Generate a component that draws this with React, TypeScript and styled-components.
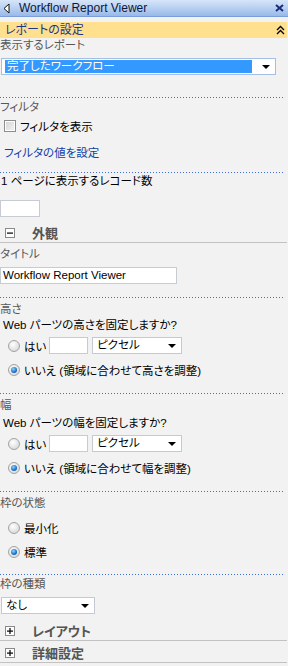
import styled, { createGlobalStyle } from "styled-components";

const GlobalStyle = createGlobalStyle`
  html, body {
    margin: 0;
    padding: 0;
    background: #f2f2f2;
  }
  body {
    font-family: "Liberation Sans", "Noto Sans CJK JP", sans-serif;
    font-size: 11.5px;
    font-feature-settings: "palt" 1;
    color: #000;
  }
`;

const Pane = styled.div`
  width: 288px;
  min-height: 666px;
  background: #f2f2f2;
  overflow: hidden;
`;

const TitleBar = styled.div`
  height: 16px;
  border-bottom: 1px solid #7c9fd9;
  background: linear-gradient(#d6e5f9, #b5cef1 55%, #98b9e8);
  display: flex;
  align-items: center;
  padding: 0 4px 0 3px;
  color: #0d1638;
  font-size: 12px;
`;

const TitleText = styled.span`
  margin-left: 9px;
  flex: 1;
  line-height: 16px;
`;

const Content = styled.div`
  width: 287px;
`;

const SectionBar = styled.div`
  margin-top: 5px;
  height: 16px;
  background: #ffe08e;
  display: flex;
  align-items: center;
  justify-content: space-between;
  padding: 0 2px 0 5px;
  color: #1e3684;
  line-height: 16px;
  font-size: 12px;
`;

const Label = styled.div<{ $mt: number; $muted?: boolean; $indent?: number }>`
  margin-top: ${(p) => p.$mt}px;
  height: 14px;
  line-height: 14px;
  padding-left: ${(p) => p.$indent ?? 0}px;
  color: ${(p) => (p.$muted ? "#585858" : "#000")};
  white-space: nowrap;
`;

const Divider = styled.div<{ $mt: number }>`
  margin-top: ${(p) => p.$mt}px;
  width: 285px;
  height: 1px;
  background: repeating-linear-gradient(
    to right,
    #3f6fd8 0 1px,
    transparent 1px 3px
  );
`;

const SelectBox = styled.div<{ $w: number; $mt?: number; $x?: number; $blue?: boolean }>`
  box-sizing: border-box;
  margin-top: ${(p) => p.$mt ?? 0}px;
  margin-left: ${(p) => p.$x ?? 0}px;
  width: ${(p) => p.$w}px;
  height: 17px;
  border: 1px solid ${(p) => (p.$blue ? "#a4bfe2" : "#c3cad4")};
  background: #fff;
  display: flex;
  align-items: center;
  padding: 0 5px 0 3px;
  line-height: 13px;
  flex-shrink: 0;
`;

const SelectValue = styled.span<{ $selected?: boolean }>`
  flex: 1;
  height: 13px;
  box-sizing: border-box;
  padding-left: 1px;
  white-space: nowrap;
  ${(p) =>
    p.$selected
      ? `background: #3399ff; color: #fff; border: 1px dotted #d9782c; line-height: 11px; margin-right: 6px;`
      : ""}
`;

const Arrow = styled.span`
  width: 0;
  height: 0;
  border-left: 4px solid transparent;
  border-right: 4px solid transparent;
  border-top: 4px solid #000;
  margin-left: 4px;
`;

const CheckRow = styled.div<{ $mt: number }>`
  margin-top: ${(p) => p.$mt}px;
  height: 16px;
  display: flex;
  align-items: center;
  padding-left: 4px;
  gap: 4px;
`;

const CheckBox = styled.span`
  box-sizing: border-box;
  width: 12px;
  height: 12px;
  border: 1px solid #8d8d8d;
  background: linear-gradient(135deg, #d4d4d4, #f4f4f4);
  box-shadow: inset 0 0 0 1px #fff;
`;

const LinkText = styled.div<{ $mt: number }>`
  margin-top: ${(p) => p.$mt}px;
  height: 14px;
  line-height: 14px;
  padding-left: 4px;
  color: #0f3fa8;
`;

const TextBox = styled.div<{ $w: number; $mt?: number; $x?: number }>`
  box-sizing: border-box;
  margin-top: ${(p) => p.$mt ?? 0}px;
  margin-left: ${(p) => p.$x ?? 0}px;
  width: ${(p) => p.$w}px;
  height: 17px;
  border: 1px solid #c7ccd4;
  background: #fff;
  padding-left: 2px;
  line-height: 15px;
  font-size: 11.5px;
  flex-shrink: 0;
`;

const GroupHeader = styled.div<{ $mt: number }>`
  margin-top: ${(p) => p.$mt}px;
  height: 19px;
  border-bottom: 1px solid #c2c2c2;
  display: flex;
  align-items: center;
  padding-left: 5px;
  color: #555;
  font-weight: bold;
  font-size: 13px;
`;

const ToggleBox = styled.span`
  box-sizing: border-box;
  width: 10px;
  height: 10px;
  border: 1px solid #8a8a8a;
  background: #fff;
  display: flex;
  align-items: center;
  justify-content: center;
  margin-right: 17px;
  margin-top: 1px;
`;

const RadioRow = styled.div<{ $mt: number; $h?: number }>`
  margin-top: ${(p) => p.$mt}px;
  height: ${(p) => p.$h ?? 14}px;
  display: flex;
  align-items: center;
  padding-left: 8px;
  white-space: nowrap;
`;

const Radio = styled.span<{ $checked?: boolean }>`
  box-sizing: border-box;
  width: 12px;
  height: 12px;
  border-radius: 50%;
  border: 1px solid #a3a3a3;
  background: radial-gradient(circle at 40% 35%, #ffffff, #d9d9d9 80%);
  display: flex;
  align-items: center;
  justify-content: center;
  margin-right: 4px;
  flex-shrink: 0;
  &::after {
    content: "";
    width: 6px;
    height: 6px;
    border-radius: 50%;
    display: ${(p) => (p.$checked ? "block" : "none")};
    background: radial-gradient(circle at 40% 35%, #8fd4ff, #1670c8 60%, #0b3f86);
  }
`;

const RadioLabel = styled.span<{ $w?: number }>`
  width: ${(p) => (p.$w ? `${p.$w}px` : "auto")};
  flex-shrink: 0;
`;

function Minus() {
  return (
    <svg width="6" height="6" viewBox="0 0 6 6">
      <rect x="0" y="2.5" width="6" height="1.2" fill="#000" />
    </svg>
  );
}

function Plus() {
  return (
    <svg width="6" height="6" viewBox="0 0 6 6">
      <rect x="0" y="2.5" width="6" height="1.2" fill="#000" />
      <rect x="2.4" y="0" width="1.2" height="6" fill="#000" />
    </svg>
  );
}

function SizeChoice({ noLabel }: { noLabel: string }) {
  return (
    <>
      <RadioRow $mt={5} $h={17}>
        <Radio />
        <RadioLabel $w={25}>はい</RadioLabel>
        <TextBox $w={39} />
        <SelectBox $w={90} $x={4}>
          <SelectValue>ピクセル</SelectValue>
          <Arrow />
        </SelectBox>
      </RadioRow>
      <RadioRow $mt={9}>
        <Radio $checked />
        <RadioLabel>{noLabel}</RadioLabel>
      </RadioRow>
    </>
  );
}

export default function App() {
  return (
    <Pane>
      <GlobalStyle />
      <TitleBar>
        <svg width="7" height="11" viewBox="0 0 7 11">
          <polygon points="6,1 1,5.5 6,10" fill="#fff" stroke="#111" strokeWidth="1" />
        </svg>
        <TitleText>Workflow Report Viewer</TitleText>
        <svg width="9" height="8" viewBox="0 0 9 8">
          <path d="M1 1 L8 7 M8 1 L1 7" stroke="#1a2c78" strokeWidth="2" />
        </svg>
      </TitleBar>
      <Content>
        <SectionBar>
          <span>レポートの設定</span>
          <svg width="9" height="10" viewBox="0 0 9 10">
            <path d="M1 5 L4.5 1.5 L8 5 M1 9 L4.5 5.5 L8 9" stroke="#000" strokeWidth="1.3" fill="none" />
          </svg>
        </SectionBar>
        <Label $mt={0} $muted>表示するレポート</Label>
        <SelectBox $w={275} $mt={6} $x={1} $blue>
          <SelectValue $selected>完了したワークフロー</SelectValue>
          <Arrow />
        </SelectBox>
        <Divider $mt={22} />
        <Label $mt={2} $muted>フィルタ</Label>
        <CheckRow $mt={4}>
          <CheckBox />
          <span>フィルタを表示</span>
        </CheckRow>
        <LinkText $mt={12}>フィルタの値を設定</LinkText>
        <Divider $mt={12} />
        <Label $mt={1} $indent={1}>1 ページに表示するレコード数</Label>
        <TextBox $w={40} $mt={12} />
        <GroupHeader $mt={6}>
          <ToggleBox>
            <Minus />
          </ToggleBox>
          外観
        </GroupHeader>
        <Label $mt={4} $muted>タイトル</Label>
        <TextBox $w={177} $mt={6}>Workflow Report Viewer</TextBox>
        <Divider $mt={13} />
        <Label $mt={4} $muted>高さ</Label>
        <Label $mt={2} $indent={3}>Web パーツの高さを固定しますか?</Label>
        <SizeChoice noLabel="いいえ (領域に合わせて高さを調整)" />
        <Divider $mt={16} />
        <Label $mt={4} $muted>幅</Label>
        <Label $mt={4} $indent={3}>Web パーツの幅を固定しますか?</Label>
        <SizeChoice noLabel="いいえ (領域に合わせて幅を調整)" />
        <Divider $mt={16} />
        <Label $mt={4} $muted>枠の状態</Label>
        <RadioRow $mt={11}>
          <Radio />
          <RadioLabel>最小化</RadioLabel>
        </RadioRow>
        <RadioRow $mt={10}>
          <Radio $checked />
          <RadioLabel>標準</RadioLabel>
        </RadioRow>
        <Divider $mt={15} />
        <Label $mt={2} $muted>枠の種類</Label>
        <SelectBox $w={94} $mt={6} $x={1}>
          <SelectValue>なし</SelectValue>
          <Arrow />
        </SelectBox>
        <GroupHeader $mt={7}>
          <ToggleBox>
            <Plus />
          </ToggleBox>
          レイアウト
        </GroupHeader>
        <GroupHeader $mt={2}>
          <ToggleBox>
            <Plus />
          </ToggleBox>
          詳細設定
        </GroupHeader>
      </Content>
    </Pane>
  );
}
